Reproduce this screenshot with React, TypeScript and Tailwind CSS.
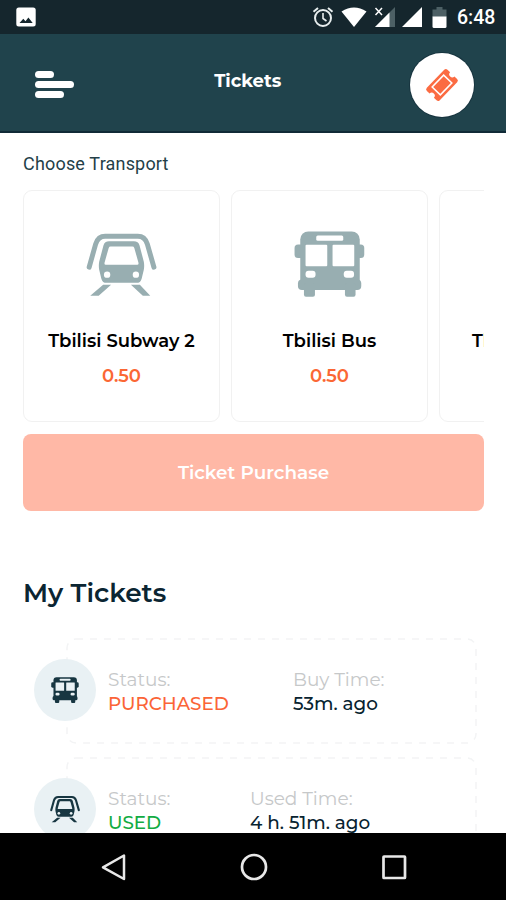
import React from "react";

const heading = "font-['Montserrat','Inter',sans-serif] whitespace-nowrap";

function BusIcon({ className, glass }: { className: string; glass: string }) {
  return (
    <svg viewBox="14 11.5 70.5 66" className={className} fill="currentColor">
      <rect x="20" y="12" width="59.5" height="58" rx="8" />
      <rect x="14.3" y="25" width="69.7" height="13.5" rx="3.5" />
      <rect x="17.7" y="60" width="63.3" height="10.5" rx="4" />
      <rect x="23.7" y="64" width="11" height="13.2" rx="2" />
      <rect x="64.7" y="64" width="10.6" height="13.2" rx="2" />
      <g fill={glass}>
        <rect x="36" y="16" width="27" height="5.2" rx="1.5" />
        <rect x="25.3" y="25.3" width="21.7" height="21.4" rx="1" />
        <rect x="52.3" y="25.3" width="21.7" height="21.4" rx="1" />
        <rect x="25.3" y="51.2" width="10" height="7" rx="3" />
        <rect x="63.5" y="51.2" width="10.3" height="7" rx="3" />
      </g>
    </svg>
  );
}

function TrainIcon({ className, glass }: { className: string; glass: string }) {
  return (
    <svg viewBox="16 13 71 63.5" className={className} fill="currentColor">
      <path d="M18.9 47.5 25.5 24Q28 16.3 35 16.3H68Q75 16.3 77.500 24L84.200 47.500" fill="none" stroke="currentColor" strokeWidth="5" strokeLinecap="round" />
      <path d="M39 21.300H64Q68.500 21.300 69.700 25.500L74 42Q74.700 46 74 50L71.800 59Q70.800 63.200 66.500 63.200H36.500Q32.200 63.200 31.200 59L29 50Q28.300 46 29 42L33.300 25.500Q34.500 21.300 39 21.300Z" />
      <path d="M40.500 26.500H62.500Q64 26.500 64.400 28L68.600 43Q69 45 67.400 45H35.600Q34 45 34.400 43L38.600 28Q39 26.500 40.500 26.500Z" fill={glass} />
      <circle cx="37" cy="55" r="3.200" fill={glass} />
      <circle cx="66" cy="55" r="3.200" fill={glass} />
      <path d="M33 65.200H41L28.500 76.300H20ZM61 65.200H70L80.500 76.300H73Z" />
    </svg>
  );
}

function StatusBar() {
  return (
    <div className="flex h-[34px] shrink-0 items-center bg-[#15262d] pl-4 pr-[10px]">
      <svg className="h-5 w-5" viewBox="0 0 20 20">
        <rect x="0.300" y="0.500" width="19.400" height="19" rx="2.500" fill="#fff" />
        <path d="M3.500 16 7.300 11.800 9.500 14.300 12.400 10.500 16.700 16Z" fill="#15262d" />
      </svg>
      <div className="ml-auto flex items-center">
        <svg className="h-[22px] w-[22px]" viewBox="0 0 22 22" fill="none" stroke="#e8eeee" strokeWidth="2">
          <circle cx="11" cy="12" r="8" />
          <path d="M1.500 5.700 6 2M20.500 5.700 16 2" />
          <path d="M11 7V12.500L14.500 15" strokeWidth="1.600" />
        </svg>
        <svg className="ml-[7px] h-5 w-[26px]" viewBox="0 0 26 20">
          <path d="M0.500 4.500Q13-3.500 25.500 4.500L13 20Z" fill="#fff" />
        </svg>
        <svg className="ml-[7px] h-5 w-[22px]" viewBox="0 0 22 20">
          <path d="M21 0V20H1Z" fill="#4d6065" />
          <path d="M15.500 5.500V20H1Z" fill="#fff" />
          <path d="M1.500 1 8 8M8 1 1.500 8" stroke="#fff" strokeWidth="1.500" />
        </svg>
        <svg className="ml-[5px] h-5 w-[22px]" viewBox="0 0 22 20">
          <path d="M21 0V20H1Z" fill="#fff" />
        </svg>
        <svg className="ml-[9px] h-[21px] w-[15px]" viewBox="0 0 15 21">
          <path d="M4.500 0H10.500V2.500H14.500V10H0.500V2.500H4.500Z" fill="#4d6065" />
          <path d="M0.500 9.500H14.500V19.500Q14.500 21 13 21H2Q0.500 21 0.500 19.500Z" fill="#fff" />
        </svg>
        <span className="ml-[10px] mt-[2px] w-[39px] font-[Roboto,sans-serif] text-[19.500px] font-medium leading-5 text-white">6:48</span>
      </div>
    </div>
  );
}

function Header() {
  return (
    <header className="flex h-[99px] shrink-0 items-center border-b-2 border-[#102a37] bg-[#20434c] pl-[35px] pr-[32.500px] pt-[4px]">
      <div className="flex w-16 flex-col gap-[3.500px]">
        <div className="h-[6.500px] w-[19px] rounded-full bg-white" />
        <div className="h-[6.500px] w-[39px] rounded-full bg-white" />
        <div className="h-[6.500px] w-[29px] rounded-full bg-white" />
      </div>
      <h1 className={`${heading} flex-1 pb-2 pr-[13px] text-center text-[18px] font-bold leading-6 text-white`}>Tickets</h1>
      <div className="flex h-16 w-16 items-center justify-center rounded-full bg-white ring-1 ring-[#17343f]">
        <svg className="h-10 w-10" viewBox="-20 -20 40 40">
          <g transform="rotate(-46)">
            <path d="M-12.500-9H12.500Q14.800-9 14.800-6.700V-3A3 3 0 0 0 14.800 3V6.700Q14.800 9 12.500 9H-12.500Q-14.800 9-14.800 6.700V3A3 3 0 0 0-14.800-3V-6.700Q-14.800-9-12.500-9Z" fill="#fb6b42" />
            <rect x="-8.300" y="-5.700" width="16.600" height="11.400" fill="none" stroke="#fff" strokeWidth="1.500" />
          </g>
        </svg>
      </div>
    </header>
  );
}

function TransportCard({ name, price, children }: { name: string; price?: string; children?: React.ReactNode }) {
  return (
    <div className="flex h-[232px] w-[197px] shrink-0 flex-col items-center rounded-[9px] border-[1px] border-[#f1f1f1] bg-white pt-[38px]">
      <div className="flex h-[70px] items-center">{children}</div>
      <div className={`${heading} mt-[30px] text-[18px] font-semibold leading-6 text-black`}>{name}</div>
      {price && <div className={`${heading} mt-[11px] text-[18px] font-semibold leading-6 text-[#fb6734]`}>{price}</div>}
    </div>
  );
}

type TicketProps = {
  status: string;
  color: string;
  label: string;
  time: string;
  column: string;
  icon: React.ReactNode;
};

function Ticket({ status, color, label, time, column, icon }: TicketProps) {
  return (
    <div className="relative ml-[66px] flex h-[106px] w-[411px] shrink-0 items-start pl-[42px] pt-[30px]">
      <svg className="absolute inset-0 h-full w-full" viewBox="0 0 411 106" fill="none">
        <rect x="1" y="1" width="409" height="104" rx="9" stroke="#f3f4f5" strokeWidth="1.500" strokeDasharray="7 7" />
      </svg>
      <div className="absolute -left-8 top-[21px] flex h-[62px] w-[62px] items-center justify-center rounded-full bg-[#e9f1f4] text-[#173641]">{icon}</div>
      <div className={column}>
        <div className={`${heading} text-[18.500px] font-normal leading-6 text-[#c6c8c9]`}>Status:</div>
        <div className={`${heading} text-[18.300px] font-medium leading-[23px] ${color}`}>{status}</div>
      </div>
      <div>
        <div className={`${heading} text-[18.500px] font-normal leading-6 text-[#c6c8c9]`}>{label}</div>
        <div className={`${heading} text-[18.400px] font-medium leading-[23px] text-[#082330]`}>{time}</div>
      </div>
    </div>
  );
}

export default function App() {
  return (
    <div className="flex h-[900px] w-[506px] flex-col overflow-hidden bg-white">
      <StatusBar />
      <Header />
      <main className="flex min-h-0 flex-1 flex-col overflow-hidden">
        <h2 className="ml-[23px] mt-[19px] font-[Roboto,sans-serif] text-[18px] leading-6 tracking-[0.180px] text-[#243f49]">Choose Transport</h2>
        <div className="ml-[23px] mr-[22px] mt-[14px] flex shrink-0 gap-[11px] overflow-hidden">
          <TransportCard name="Tbilisi Subway 2" price="0.50">
            <TrainIcon className="h-[63px] w-[71px] text-[#98aeb1]" glass="#fff" />
          </TransportCard>
          <TransportCard name="Tbilisi Bus" price="0.50">
            <BusIcon className="h-[66px] w-[71px] text-[#98aeb1]" glass="#fff" />
          </TransportCard>
          <TransportCard name="Tbilisi Subway" />
        </div>
        <button className={`${heading} ml-[23px] mt-3 h-[77px] w-[461px] shrink-0 rounded-lg bg-[#ffb8a6] pt-[1px] text-[18.400px] font-semibold text-white`}>Ticket Purchase</button>
        <h2 className={`${heading} ml-[23px] mt-[66px] text-[26.300px] font-semibold leading-8 text-[#0b2532]`}>My Tickets</h2>
        <div className="mt-[29px] flex flex-col gap-[13px]">
          <Ticket status="PURCHASED" color="text-[#fb6437]" label="Buy Time:" time="53m. ago" column="w-[185px]" icon={<BusIcon className="h-[26px] w-[28px]" glass="#e9f1f4" />} />
          <Ticket status="USED" color="text-[#12ac43]" label="Used Time:" time="4 h. 51m. ago" column="w-[142px]" icon={<TrainIcon className="h-[28px] w-[30px]" glass="#e9f1f4" />} />
        </div>
      </main>
      <nav className="flex h-[67px] shrink-0 items-center bg-black pl-[100px]">
        <svg className="h-[30px] w-[30px]" viewBox="0 0 30 30" fill="none" stroke="#e8e8e8" strokeWidth="2.500" strokeLinejoin="round">
          <path d="M24 3.500V27L3 15.300Z" />
        </svg>
        <svg className="ml-[109px] h-[30px] w-[30px]" viewBox="0 0 30 30" fill="none" stroke="#e8e8e8" strokeWidth="2.700">
          <circle cx="15" cy="15" r="12" />
        </svg>
        <svg className="ml-[110px] h-[30px] w-[30px]" viewBox="0 0 30 30" fill="none" stroke="#e8e8e8" strokeWidth="2.700">
          <rect x="4.500" y="4.500" width="21.500" height="21.500" rx="0.500" />
        </svg>
      </nav>
    </div>
  );
}
